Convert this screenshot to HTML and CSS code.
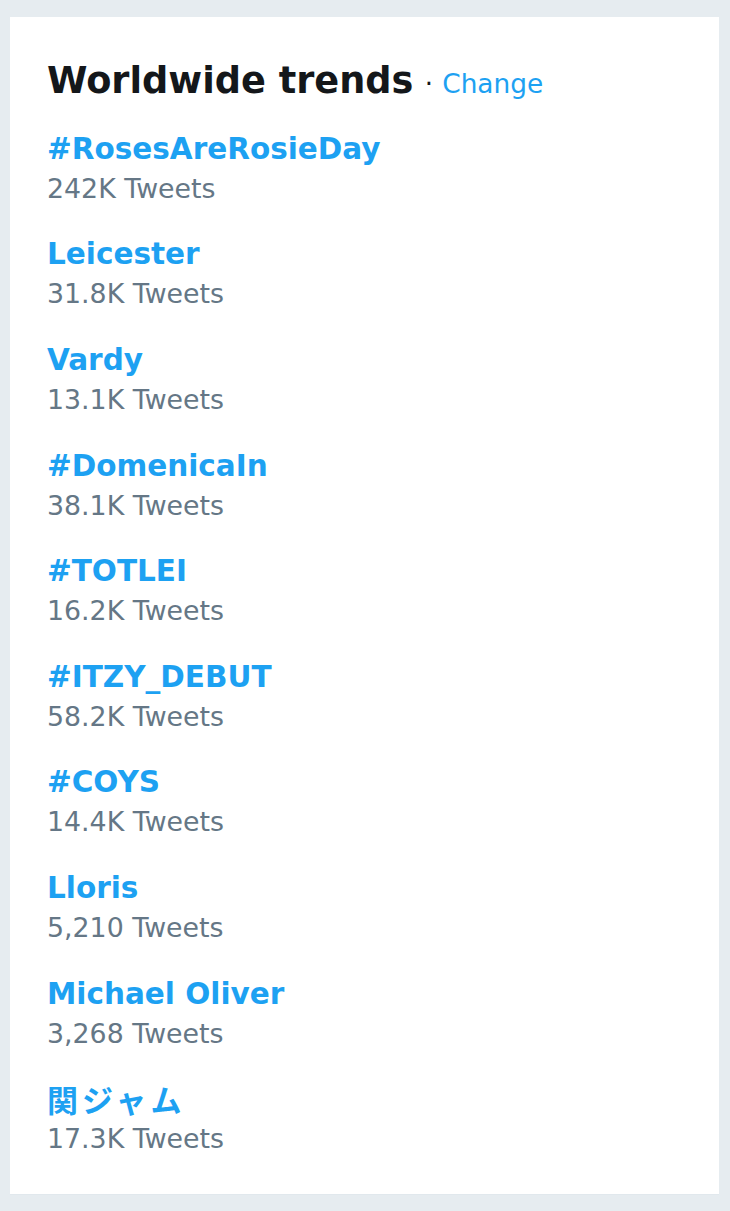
FILE: index.html
```html
<!DOCTYPE html>
<html lang="en">
<head>
<meta charset="utf-8">
<title>Worldwide trends</title>
<link rel="stylesheet" href="styles.css">
</head>
<body>
<section class="card">
  <h2 class="title">Worldwide trends<span class="dot"> · </span><a class="change" href="#">Change</a></h2>
  <ul class="trends">
    <li class="trend"><a class="name" href="#">#RosesAreRosieDay</a><span class="count">242K Tweets</span></li>
    <li class="trend"><a class="name" href="#">Leicester</a><span class="count">31.8K Tweets</span></li>
    <li class="trend"><a class="name" href="#">Vardy</a><span class="count">13.1K Tweets</span></li>
    <li class="trend"><a class="name" href="#">#DomenicaIn</a><span class="count">38.1K Tweets</span></li>
    <li class="trend"><a class="name" href="#">#TOTLEI</a><span class="count">16.2K Tweets</span></li>
    <li class="trend"><a class="name" href="#">#ITZY_DEBUT</a><span class="count">58.2K Tweets</span></li>
    <li class="trend"><a class="name" href="#">#COYS</a><span class="count">14.4K Tweets</span></li>
    <li class="trend"><a class="name" href="#">Lloris</a><span class="count">5,210 Tweets</span></li>
    <li class="trend"><a class="name" href="#">Michael Oliver</a><span class="count">3,268 Tweets</span></li>
    <li class="trend"><a class="name cjk" href="#" lang="ja">関ジャム</a><span class="count">17.3K Tweets</span></li>
  </ul>
</section>
</body>
</html>
```

FILE: styles.css
```css
html, body {
  margin: 0;
  padding: 0;
}

body {
  background: #e6ecf0;
  padding: 17px 11px 18px 10px;
  font-family: "DejaVu Sans", "Noto Sans CJK JP", sans-serif;
}

.card {
  background: #ffffff;
  border-bottom: 1px solid #e1e8ed;
  padding: 42px 20px 23px 37px;
}

.title {
  margin: 0 0 9px 0;
  font-size: 36.7px;
  line-height: 44px;
  font-weight: bold;
  color: #14171a;
  white-space: nowrap;
}

.dot {
  padding-left: 3px;
  font-size: 26px;
  font-weight: normal;
  color: #14171a;
}

.change {
  margin-left: 1px;
  font-size: 26.4px;
  font-weight: normal;
  color: #1da1f2;
  text-decoration: none;
}

.trends {
  list-style: none;
  margin: 0;
  padding: 0;
}

.trend {
  display: flex;
  flex-direction: column;
  padding: 12.8px 0;
}

.name {
  font-size: 29.5px;
  line-height: 42px;
  font-weight: bold;
  color: #1da1f2;
  text-decoration: none;
}

.name.cjk {
  font-family: "Noto Sans CJK JP", sans-serif;
  font-weight: bold;
  font-size: 31px;
  letter-spacing: 4px;
}

.count {
  font-size: 26.8px;
  line-height: 38px;
  color: #657786;
}
```
